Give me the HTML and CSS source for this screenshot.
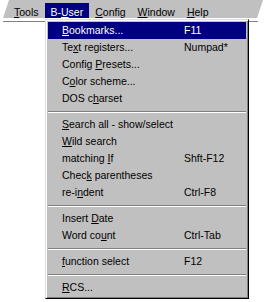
FILE: index.html
```html
<!DOCTYPE html>
<html lang="en">
<head>
    <meta charset="UTF-8">
    <title>B-User menu</title>
    <link rel="stylesheet" href="styles.css">
</head>
<body>
    <div class="screen">
        <div class="menubar">
            <span class="menubar-item"><u>T</u>ools</span>
            <span class="menubar-item is-open">B-<u>U</u>ser</span>
            <span class="menubar-item"><u>C</u>onfig</span>
            <span class="menubar-item"><u>W</u>indow</span>
            <span class="menubar-item"><u>H</u>elp</span>
        </div>
        <div class="menubar-rule"></div>

        <div class="dropdown">
            <div class="menu-item is-active"><span class="label"><u>B</u>ookmarks...</span><span class="key">F11</span></div>
            <div class="menu-item"><span class="label">Te<u>x</u>t registers...</span><span class="key">Numpad*</span></div>
            <div class="menu-item"><span class="label">Config <u>P</u>resets...</span></div>
            <div class="menu-item"><span class="label">C<u>o</u>lor scheme...</span></div>
            <div class="menu-item"><span class="label">DOS c<u>h</u>arset</span></div>
            <div class="menu-sep"></div>
            <div class="menu-item"><span class="label"><u>S</u>earch all - show/select</span></div>
            <div class="menu-item"><span class="label"><u>W</u>ild search</span></div>
            <div class="menu-item"><span class="label">matching <u>I</u>f</span><span class="key">Shft-F12</span></div>
            <div class="menu-item"><span class="label">Chec<u>k</u> parentheses</span></div>
            <div class="menu-item"><span class="label">re-i<u>n</u>dent</span><span class="key">Ctrl-F8</span></div>
            <div class="menu-sep"></div>
            <div class="menu-item"><span class="label">Insert <u>D</u>ate</span></div>
            <div class="menu-item"><span class="label">Word co<u>u</u>nt</span><span class="key">Ctrl-Tab</span></div>
            <div class="menu-sep"></div>
            <div class="menu-item"><span class="label"><u>f</u>unction select</span><span class="key">F12</span></div>
            <div class="menu-sep"></div>
            <div class="menu-item"><span class="label"><u>R</u>CS...</span></div>
        </div>
    </div>
</body>
</html>
```

FILE: styles.css
```css
:root {
    --face: #c0c0c0;
    --shadow: #808080;
    --select: #000080;
}

* {
    margin: 0;
    padding: 0;
    box-sizing: border-box;
}

body {
    font-family: 'Liberation Sans', Arial, sans-serif;
    font-size: 10.5px;
    color: #000;
    background: #fff;
}

.screen {
    position: relative;
    width: 264px;
    height: 302px;
    overflow: hidden;
}

/* torn-off strip of the menu bar */
.menubar {
    display: flex;
    height: 18px;
    padding-left: 8px;
    background: var(--face);
    clip-path: polygon(9px 0, 263px 0, 257px 100%, 3px 100%);
}

.menubar-item {
    height: 15px;
    margin-top: 3px;
    padding: 0 6px;
    line-height: 18px;
}

.menubar-item.is-open {
    background: var(--select);
    color: #fff;
}

.menubar-rule {
    height: 1px;
    margin: 3px 6px 0 3px;
    background: var(--shadow);
}

/* the open drop-down */
.dropdown {
    position: absolute;
    top: 19px;
    left: 45px;
    width: 204px;
    padding: 2px;
    background: var(--face);
    border: 1px solid;
    border-color: #dfdfdf #000 #000 #dfdfdf;
    box-shadow: inset 1px 1px #fff, inset -1px -1px var(--shadow);
}

.menu-item {
    display: flex;
    height: 17px;
    padding-left: 14px;
    line-height: 17px;
    white-space: nowrap;
}

.menu-item .label {
    width: 122px;
}

.menu-item.is-active {
    background: var(--select);
    color: #fff;
}

.menu-sep {
    height: 2px;
    margin: 4px 0 3px;
    border-top: 1px solid var(--shadow);
    border-bottom: 1px solid #fff;
}

u {
    text-underline-offset: 1px;
}
```
